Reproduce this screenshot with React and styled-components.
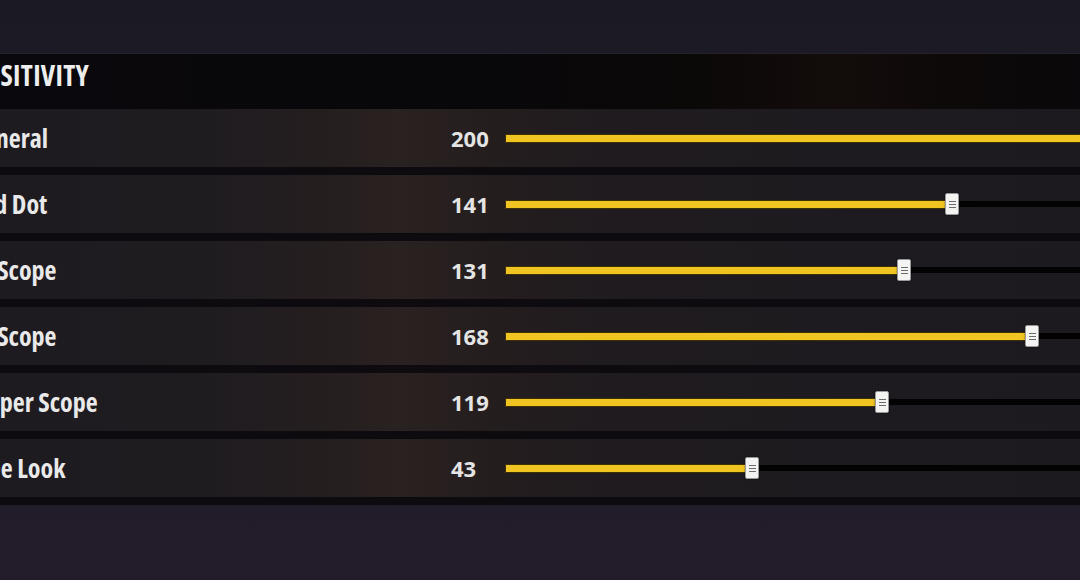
import React from "react";
import styled, { createGlobalStyle } from "styled-components";

const GlobalStyle = createGlobalStyle`
  html, body {
    margin: 0;
    padding: 0;
    background: #1f1a27;
    overflow: hidden;
  }
  * { box-sizing: border-box; }
`;

const TRACK_WIDTH = 640;

const settings = [
  { label: "General", value: 200, pos: 1 },
  { label: "Red Dot", value: 141, pos: 0.7 },
  { label: "2x Scope", value: 131, pos: 0.625 },
  { label: "4x Scope", value: 168, pos: 0.825 },
  { label: "Sniper Scope", value: 119, pos: 0.59 },
  { label: "Free Look", value: 43, pos: 0.3875 },
];

const Screen = styled.div`
  width: 1080px;
  height: 580px;
  overflow: hidden;
  display: flex;
  flex-direction: column;
  background: linear-gradient(180deg, #1e1a26 0%, #221c2b 100%);
  font-family: "Open Sans", "Liberation Sans", sans-serif;
  font-stretch: 75%;
  color: #ececec;
`;

const TopBar = styled.div`
  height: 54px;
  flex: none;
  background: linear-gradient(180deg, #1b1922 0%, #1c1a24 100%);
  border-bottom: 1px solid #24212c;
`;

const Panel = styled.section`
  margin-left: -42px;
  width: 1220px;
  display: flex;
  flex-direction: column;
`;

const Header = styled.div`
  height: 55px;
  padding: 7px 0 0 0;
  background: linear-gradient(
    90deg,
    #0a080c 0%,
    #08070a 40%,
    #0b0808 60%,
    #130c0b 72%,
    #0d0909 82%,
    #08070b 100%
  );
`;

const Title = styled.h2`
  margin: 0;
  font-size: 28px;
  line-height: 28px;
  font-weight: 700;
  letter-spacing: 0.3px;
  color: #ededed;
`;

const RowList = styled.div`
  display: flex;
  flex-direction: column;
  gap: 8px;
  padding-bottom: 8px;
  background: #0d0b0f;
`;

const Row = styled.div`
  height: 58px;
  display: grid;
  grid-template-columns: 493px 54px ${TRACK_WIDTH}px;
  align-items: center;
  background: linear-gradient(
    90deg,
    #1d1b20 0%,
    #1f1c20 20%,
    #251e1f 30%,
    #2a2220 36%,
    #241d1e 44%,
    #1f1b1f 55%,
    #1e1b20 75%,
    #1c1a1f 100%
  );
`;

const Label = styled.span`
  padding-left: 11px;
  font-size: 26px;
  font-weight: 700;
  color: #e9e9e9;
`;

const Value = styled.span`
  font-size: 22px;
  font-weight: 700;
  font-stretch: 100%;
  color: #e4e4e4;
`;

const Track = styled.div`
  height: 6px;
  display: flex;
  align-items: center;
  background: #040304;
`;

const Fill = styled.div`
  position: relative;
  height: 9px;
  flex: none;
  background: #f1c521;
  border: 1px solid #3e3006;
  border-radius: 1px;
`;

const Handle = styled.div`
  position: absolute;
  right: -7px;
  top: 50%;
  width: 14px;
  height: 22px;
  margin-top: -11px;
  display: flex;
  align-items: center;
  justify-content: center;
  background: #f3f3f1;
  border: 1px solid #9a9a9a;
  border-radius: 2px;
  box-shadow: 0 0 2px rgba(0, 0, 0, 0.6);
`;

const Grip = styled.span`
  width: 7px;
  height: 7px;
  background: repeating-linear-gradient(
    180deg,
    #6b6b6b 0px,
    #6b6b6b 1px,
    transparent 1px,
    transparent 3px
  );
`;

function Slider({ pos }) {
  return (
    <Track>
      <Fill style={{ width: `${Math.round(pos * TRACK_WIDTH)}px` }}>
        {pos < 1 && (
          <Handle>
            <Grip />
          </Handle>
        )}
      </Fill>
    </Track>
  );
}

export default function App() {
  return (
    <>
      <GlobalStyle />
      <Screen>
        <TopBar />
        <Panel>
          <Header>
            <Title>SENSITIVITY</Title>
          </Header>
          <RowList>
            {settings.map((s) => (
              <Row key={s.label}>
                <Label>{s.label}</Label>
                <Value>{s.value}</Value>
                <Slider pos={s.pos} />
              </Row>
            ))}
          </RowList>
        </Panel>
      </Screen>
    </>
  );
}
